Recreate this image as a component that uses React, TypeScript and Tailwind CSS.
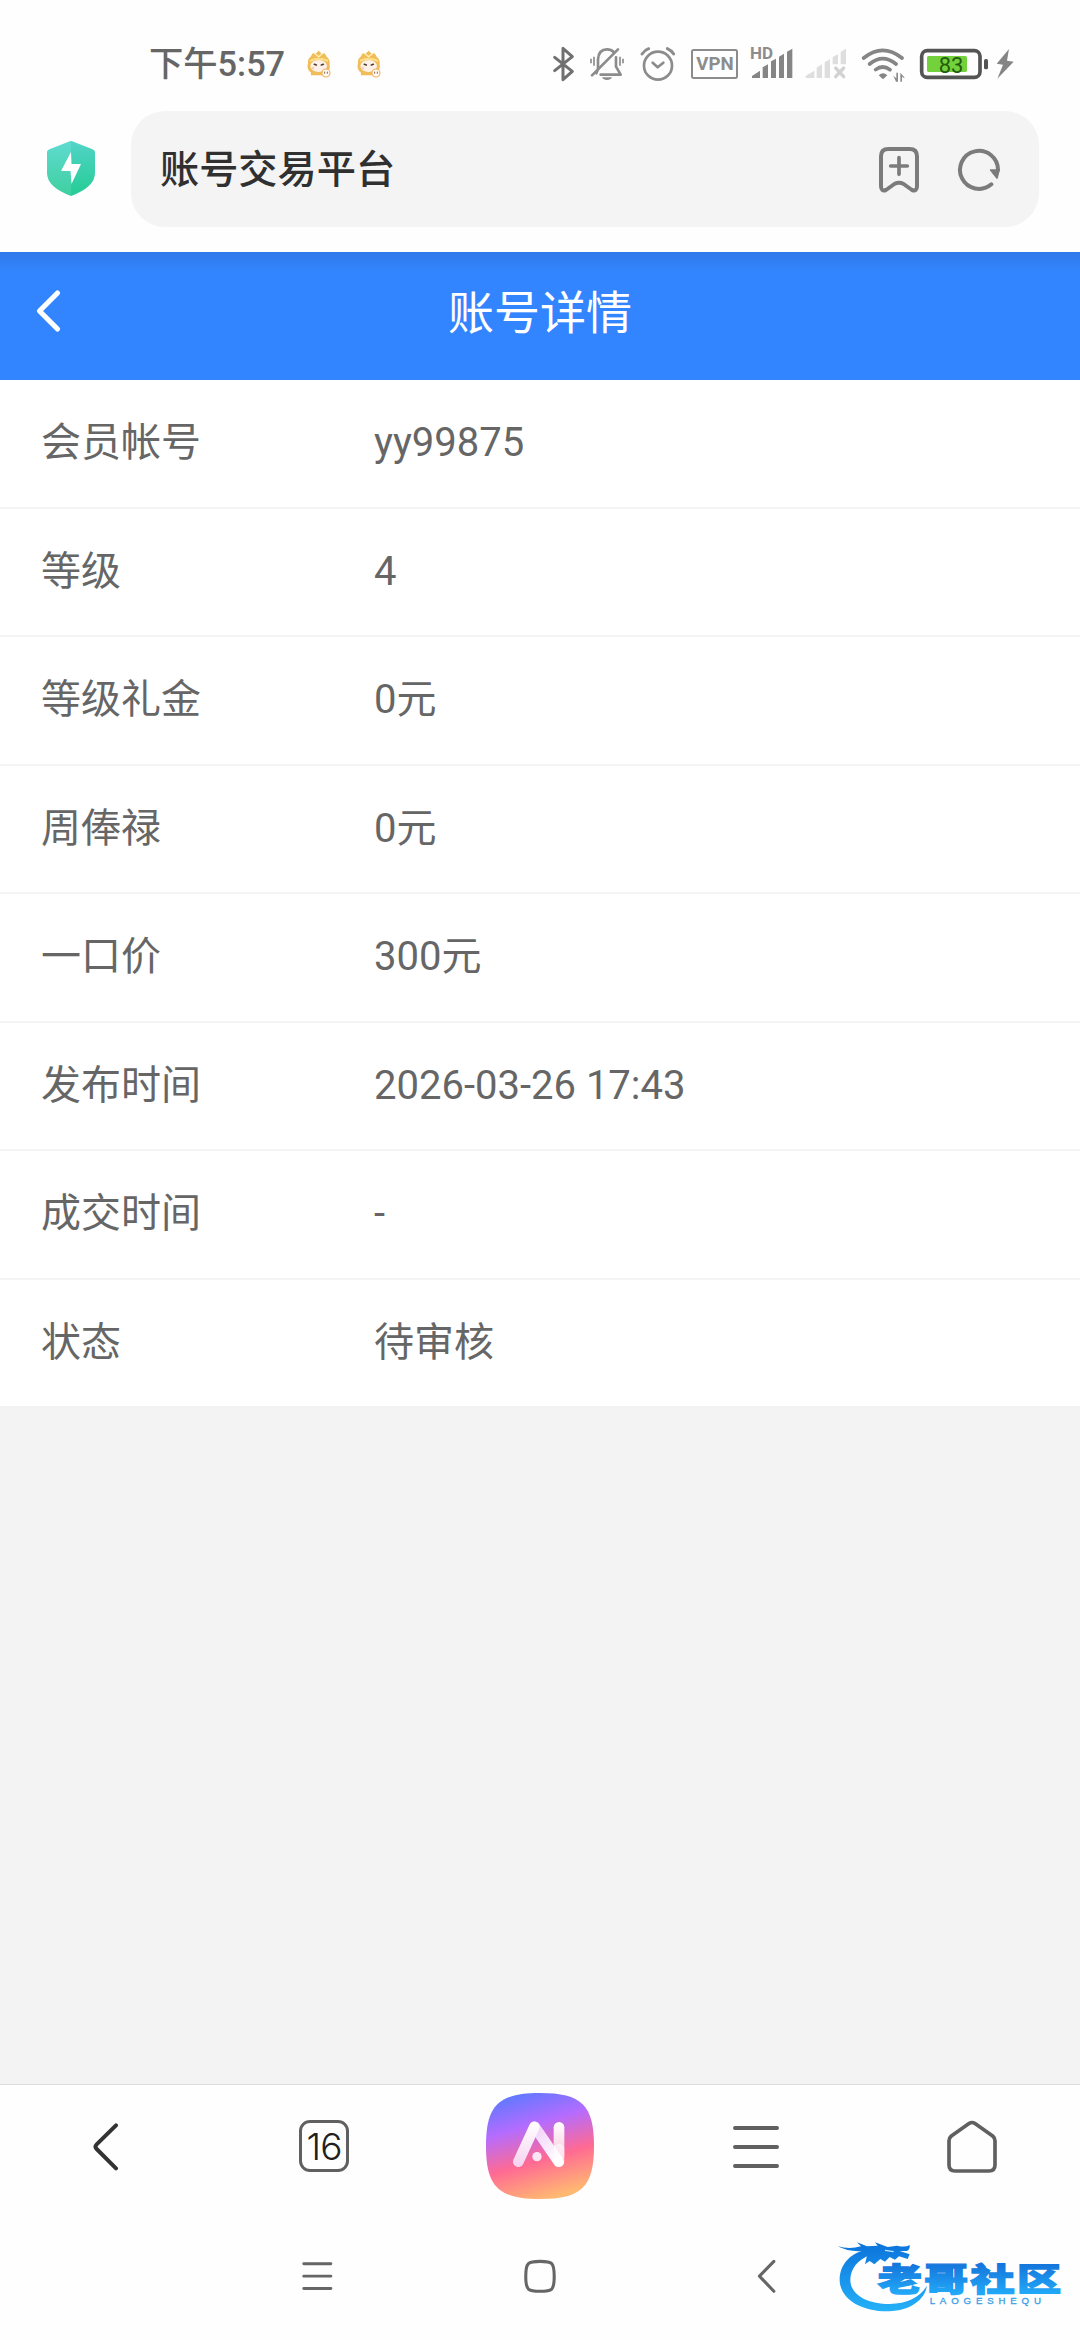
import type { ReactNode } from 'react';

const rows = [
  { label: '会员帐号', value: 'yy99875' },
  { label: '等级', value: '4' },
  { label: '等级礼金', value: '0元' },
  { label: '周俸禄', value: '0元' },
  { label: '一口价', value: '300元' },
  { label: '发布时间', value: '2026-03-26 17:43' },
  { label: '成交时间', value: '-' },
  { label: '状态', value: '待审核' },
];

interface GlyphProps {
  box: string;
  className: string;
  children: ReactNode;
}

function Glyph({ box, className, children }: GlyphProps) {
  return (
    <svg viewBox={box} className={`block shrink-0 ${className}`} fill="none" strokeLinecap="round" strokeLinejoin="round">
      {children}
    </svg>
  );
}

function Mascot() {
  return (
    <Glyph box="0 0 78 84" className="h-[28px] w-[26px]">
      <path d="M14 76 Q18 68 10 64 Q2 54 6 40 Q4 26 14 20 L20 10 L28 12 L38 2 L48 12 L56 10 L62 20 Q73 28 71 44 Q74 58 62 66 L60 76 Z" fill="#f0bd58" />
      <path d="M14 32 Q38 20 64 32" stroke="#fbe08c" strokeWidth="6" />
      <path d="M28 12 L38 20 L48 12" stroke="#fff0b8" strokeWidth="4" />
      <ellipse cx="38" cy="48" rx="25" ry="18" fill="#fdf0e6" />
      <path d="M25 43 L31 45 M46 45 L52 43" stroke="#4b3a35" strokeWidth="5" />
      <circle cx="21" cy="54" r="4" fill="#f9cdbd" />
      <circle cx="60" cy="69" r="12" fill="#fffaf2" stroke="#efb168" strokeWidth="3.5" />
      <path d="M56 66 V70 M64 66 V70" stroke="#8a6a4b" strokeWidth="3" />
    </Glyph>
  );
}

function StatusBar() {
  return (
    <div className="flex h-[111px] items-start justify-between pr-[65px] pl-[149px] pt-[44px]">
      <div className="flex h-10 items-center">
        <span className="text-[34.300px] leading-10 font-medium whitespace-nowrap text-[#666]">下午5:57</span>
        <div className="ml-[21px] flex gap-[24px]">
          <Mascot />
          <Mascot />
        </div>
      </div>

      <div className="flex">
        {/* bluetooth */}
        <Glyph box="36 42 72 120" className="h-10 w-6">
          <path d="M44 82 L97 124 L69 149 V55 L97 80 L44 122" stroke="#707070" strokeWidth="9" />
        </Glyph>
        {/* muted bell */}
        <Glyph box="147 42 108 120" className="ml-[13px] h-10 w-9">
          <path d="M169 130 L174 118 V88 Q176 58 201 58 Q214 58 221 66 M228 82 V110 L242 134 H182" stroke="#8c8c8c" strokeWidth="8" />
          <path d="M156 136 L234 58" stroke="#8c8c8c" strokeWidth="8" />
          <path d="M186 142 H216 Q212 150 201 150 Q190 150 186 142 Z" fill="#8c8c8c" />
          <path d="M153 86 V100 M162 80 V107 M240 80 V107 M249 86 V100" stroke="#8c8c8c" strokeWidth="5" strokeLinecap="butt" />
        </Glyph>
        {/* alarm */}
        <Glyph box="297 42 114 120" className="ml-[14px] h-10 w-[38px]">
          <circle cx="354" cy="107" r="42" stroke="#8c8c8c" strokeWidth="8" />
          <path d="M338 98 L353 112 L370 98" stroke="#8c8c8c" strokeWidth="8" />
          <path d="M306 72 Q314 60 326 56 M382 56 Q394 61 401 72" stroke="#8c8c8c" strokeWidth="9" />
        </Glyph>
        {/* vpn */}
        <Glyph box="450 42 147 120" className="ml-[13px] h-10 w-[49px]">
          <rect x="456" y="60" width="135" height="84" rx="5" stroke="#8c8c8c" strokeWidth="6" />
          <text x="469" y="121" fontSize="54" fontWeight="700" fill="#8c8c8c" textLength="112" lengthAdjust="spacingAndGlyphs" fontFamily="Roboto, sans-serif">VPN</text>
        </Glyph>
        {/* hd signal */}
        <Glyph box="630 42 129 120" className="ml-[11px] h-10 w-[43px]">
          <text x="630" y="87" fontSize="47" fontWeight="700" fill="#8c8c8c" textLength="69" lengthAdjust="spacingAndGlyphs" fontFamily="Roboto, sans-serif">HD</text>
          <path d="M636 144 V138 L660 122 V144 Z M668 144 V112 L684 103 V144 Z M693 144 V94 L708 86 V144 Z M717 144 V80 L732 71 V144 Z M741 144 V65 L757 56 V144 Z" fill="#858585" />
        </Glyph>
        {/* second sim */}
        <Glyph box="45 42 126 120" className="ml-[12px] h-10 w-[42px]">
          <path d="M47 144 V138 L73 122 V144 Z M80 144 V113 L96 103 V144 Z M104 144 V97 L120 88 V144 Z M128 103 V81 L144 73 V103 Z M152 103 V65 L168 56 V103 Z" fill="#dedede" />
          <path d="M137 114 L161 140 M161 114 L137 140" stroke="#d2d2d2" strokeWidth="10" />
        </Glyph>
        {/* wifi */}
        <Glyph box="213 42 132 120" className="ml-[14px] h-10 w-11">
          <path d="M221 84 Q278 38 336 84 M239 102 Q278 70 318 102 M257 119 Q278 103 300 119" stroke="#858585" strokeWidth="11" />
          <path d="M266 136 Q279 124 292 136 L279 148 Z" fill="#858585" />
          <path d="M310 137 L319 145 V128 H324 V155 H318 Z M331 155 V128 L343 142 V145 L336 140 V155 Z" fill="#8c8c8c" />
        </Glyph>
        {/* battery */}
        <Glyph box="387 42 210 120" className="ml-[14px] h-10 w-[70px]">
          <rect x="395" y="62" width="175" height="80" rx="17" stroke="#545454" strokeWidth="11" />
          <rect x="411" y="78" width="120" height="48" rx="5" fill="#73d13c" />
          <rect x="582" y="87" width="12" height="31" rx="5" fill="#545454" />
          <text x="483" y="128" fontSize="66" fill="#235c0d" textAnchor="middle" fontFamily="Roboto, sans-serif">83</text>
        </Glyph>
        {/* charging */}
        <Glyph box="615 42 60 120" className="ml-[6px] h-10 w-5">
          <path d="M657 57 L620 101 L639 104 L622 146 L671 95 L651 92 Z" fill="#858585" />
        </Glyph>
      </div>
    </div>
  );
}

function AddressBar() {
  return (
    <div className="flex h-[141px] items-start pr-[41px]">
      <div className="flex h-[116px] w-[131px] items-center pl-[44px]">
        <svg viewBox="0 0 54 60" className="h-[60px] w-[54px]">
          <defs>
            <linearGradient id="shieldL" x1="0" y1="0" x2="0" y2="1">
              <stop offset="0%" stopColor="#5fdbd0" />
              <stop offset="100%" stopColor="#3ecf9f" />
            </linearGradient>
            <linearGradient id="shieldR" x1="0" y1="0" x2="0" y2="1">
              <stop offset="0%" stopColor="#52d4c8" />
              <stop offset="100%" stopColor="#25cc94" />
            </linearGradient>
          </defs>
          <path d="M27 2 Q26 2 24 3 L6 10 Q3 11 3 13 V34 Q3 48 27 57 Z" fill="url(#shieldL)" />
          <path d="M27 2 Q28 2 30 3 L48 10 Q51 11 51 13 V34 Q51 48 27 57 Z" fill="url(#shieldR)" />
          <path d="M27 13 L17 32 H26.500 L27.500 45 L37 25 H27.500 Z" fill="#fff" />
        </svg>
      </div>
      <div className="flex h-[116px] flex-1 items-center rounded-[34px] bg-[#f4f4f4] pr-[37px] pl-[29px]">
        <h1 className="flex-1 pt-[3px] text-[39.200px] leading-none font-medium text-[#303030]">账号交易平台</h1>
        <Glyph box="108 132 132 147" className="h-[49px] w-[44px]">
          <path d="M142 144 H206 Q228 144 228 166 V256 Q228 272 213 267 L188 249 Q174 242 160 249 L135 267 Q120 272 120 256 V166 Q120 144 142 144 Z" stroke="#7b7b7b" strokeWidth="12" />
          <path d="M174 170 V220 M149 195 H199" stroke="#7b7b7b" strokeWidth="11" />
        </Glyph>
        <Glyph box="345 132 138 147" className="ml-[35px] h-[49px] w-[46px]">
          <path d="M451 250 A57 57 0 1 1 471 207" stroke="#7b7b7b" strokeWidth="12" />
          <path d="M449 207 H474 L468 231 Z" fill="#7b7b7b" stroke="#7b7b7b" strokeWidth="5" />
        </Glyph>
      </div>
    </div>
  );
}

function BottomBar() {
  return (
    <div className="grid h-[124px] grid-cols-5 items-center justify-items-center border-t border-[#dcdcdc]">
      <Glyph box="96 150 84 162" className="mr-[4px] h-[54px] w-7">
        <path d="M168 166 L110 223 Q103 230 110 237 L168 295" stroke="#333" strokeWidth="12" />
      </Glyph>
      <div className="mb-px flex h-[52px] w-[50px] items-center justify-center rounded-[11px] border-[3.500px] border-[#606060] font-[Inter] text-[37px] leading-none font-light tracking-[-1px] text-[#202020]">
        16
      </div>
      <svg viewBox="78 67 324 318" className="mb-[2px] h-[106px] w-[108px]">
        <defs>
          <linearGradient id="aiBg" x1="0.25" y1="0" x2="0.55" y2="1">
            <stop offset="0%" stopColor="#5c79ff" />
            <stop offset="32%" stopColor="#b46cff" />
            <stop offset="65%" stopColor="#ff6a93" />
            <stop offset="100%" stopColor="#ffb872" />
          </linearGradient>
          <linearGradient id="aiLeg" gradientUnits="userSpaceOnUse" x1="0" y1="155" x2="0" y2="290">
            <stop offset="0%" stopColor="#fff" />
            <stop offset="100%" stopColor="#f6d2f0" />
          </linearGradient>
          <linearGradient id="aiDiag" gradientUnits="userSpaceOnUse" x1="230" y1="185" x2="295" y2="275">
            <stop offset="0%" stopColor="#f3d7fa" />
            <stop offset="100%" stopColor="#fff" />
          </linearGradient>
          <linearGradient id="aiStem" gradientUnits="userSpaceOnUse" x1="0" y1="155" x2="0" y2="250">
            <stop offset="0%" stopColor="#fff" />
            <stop offset="100%" stopColor="#fbcde0" />
          </linearGradient>
        </defs>
        <path d="M240 67 C365 67 402 104 402 226 C402 348 365 385 240 385 C115 385 78 348 78 226 C78 104 115 67 240 67 Z" fill="url(#aiBg)" />
        <g fill="none" strokeLinecap="round" strokeWidth="32">
          <path d="M297 170 V255" stroke="url(#aiStem)" />
          <path d="M224 168 L296 273" stroke="url(#aiDiag)" />
          <path d="M297 235 V273" stroke="#fff" strokeOpacity="0.5" />
          <path d="M175 273 L223 169" stroke="url(#aiLeg)" />
        </g>
        <circle cx="231" cy="258" r="14" fill="#fbe4f3" />
      </svg>
      <Glyph box="126 150 144 162" className="h-[54px] w-12">
        <path d="M135 174 H261 M135 231 H261 M135 288 H261" stroke="#606060" strokeWidth="12" />
      </Glyph>
      <Glyph box="765 147 162 162" className="h-[54px] w-[54px]">
        <path d="M838 157 Q846 152 854 157 L908 195 Q915 201 915 209 V282 Q915 300 897 300 H795 Q777 300 777 282 V209 Q777 201 784 195 Z" stroke="#606060" strokeWidth="11" />
      </Glyph>
    </div>
  );
}

function SystemNav() {
  return (
    <div className="flex h-[132px] items-center pt-[5px] pl-[300.700px]">
      <Glyph box="60 114 96 102" className="h-[35px] w-[33px]">
        <path d="M68 128 H147 M68 164 H147 M68 200 H147" stroke="#666" strokeWidth="8.500" />
      </Glyph>
      <Glyph box="705 114 102 102" className="ml-[189px] h-[35px] w-[35px]">
        <path d="M755 121 C790 121 796 124 796 165 C796 205 790 208 755 208 C720 208 713 205 713 165 C713 124 720 121 755 121 Z" stroke="#666" strokeWidth="9" />
      </Glyph>
      <Glyph box="1383 114 66 102" className="ml-[198.300px] h-[35px] w-[22.700px]">
        <path d="M1435 121 L1393 164 L1435 208" stroke="#666" strokeWidth="9" />
      </Glyph>
    </div>
  );
}

function CommunityMark() {
  return (
    <svg viewBox="40 50 700 240" className="absolute right-[13.300px] bottom-[23.300px] h-[80px] w-[233.300px]">
      <defs>
        <linearGradient id="markRing" gradientUnits="userSpaceOnUse" x1="0" y1="70" x2="0" y2="272">
          <stop offset="0%" stopColor="#0b74dc" />
          <stop offset="100%" stopColor="#25b0f8" />
        </linearGradient>
        <linearGradient id="markText" gradientUnits="userSpaceOnUse" x1="0" y1="-78" x2="0" y2="6">
          <stop offset="0%" stopColor="#1577dc" />
          <stop offset="100%" stopColor="#22a8f8" />
        </linearGradient>
      </defs>
      <path d="M160 84 C92 92 60 134 60 178 C60 236 126 275 208 273 C272 271 316 238 322 196 C300 232 262 250 210 251 C140 251 92 222 92 178 C92 148 112 118 152 104 Z" fill="url(#markRing)" />
      <path d="M54 78 Q90 88 124 78 L112 66 L142 78 L174 76 L166 66 L204 80 L232 76 Q258 82 270 74 Q272 86 262 92 L240 92 L270 102 L264 116 L238 108 L226 118 L210 110 L196 124 L182 116 L164 132 L150 122 L136 132 L142 106 L128 92 Q90 96 54 78 Z" fill="url(#markRing)" />
      <path d="M196 90 L222 94" stroke="#bde6ff" strokeWidth="4" />
      <g transform="translate(174 213) scale(1.38 1)">
        <text x="0" y="0" fontSize="96" fontWeight="900" fill="url(#markText)" stroke="url(#markText)" strokeWidth="4" textLength="399" fontFamily="'Noto Sans CJK SC', sans-serif">老哥社区</text>
      </g>
      <text x="330" y="252" fontSize="29" fill="#3c9fe8" stroke="#3c9fe8" strokeWidth="1" textLength="334" fontFamily="'Liberation Sans', sans-serif">LAOGESHEQU</text>
    </svg>
  );
}

export default function App() {
  return (
    <div className="relative flex h-[2340px] w-[1080px] flex-col overflow-hidden bg-[#f3f3f3] font-[Roboto,'Noto_Sans_CJK_SC',sans-serif]">
      <div className="bg-[#fefefe]">
        <StatusBar />
        <AddressBar />
      </div>

      <header className="grid h-[128px] grid-cols-[1fr_auto_1fr] items-center bg-[#3385ff] bg-[linear-gradient(#2f7ae9,#3385ff_20px)] px-[34px] pb-[6px]">
        <Glyph box="0 0 30 46" className="mb-[4px] h-[46px] w-[30px]">
          <path d="M23.500 5 L5.500 23 L23.500 41" stroke="#fff" strokeWidth="5.200" />
        </Glyph>
        <h2 className="text-[46px] leading-none text-white">账号详情</h2>
      </header>

      <dl className="bg-white">
        {rows.map((row) => (
          <div key={row.label} className="flex h-[128.500px] items-center border-b-2 border-[#f4f4f4] pl-[41px] text-[40px] leading-none text-[#666] last:h-[126px] last:border-b-0">
            <dt className="w-[333px]">{row.label}</dt>
            <dd>{row.value}</dd>
          </div>
        ))}
      </dl>

      <footer className="mt-auto bg-[#fefefe]">
        <BottomBar />
        <SystemNav />
      </footer>

      <CommunityMark />
    </div>
  );
}
